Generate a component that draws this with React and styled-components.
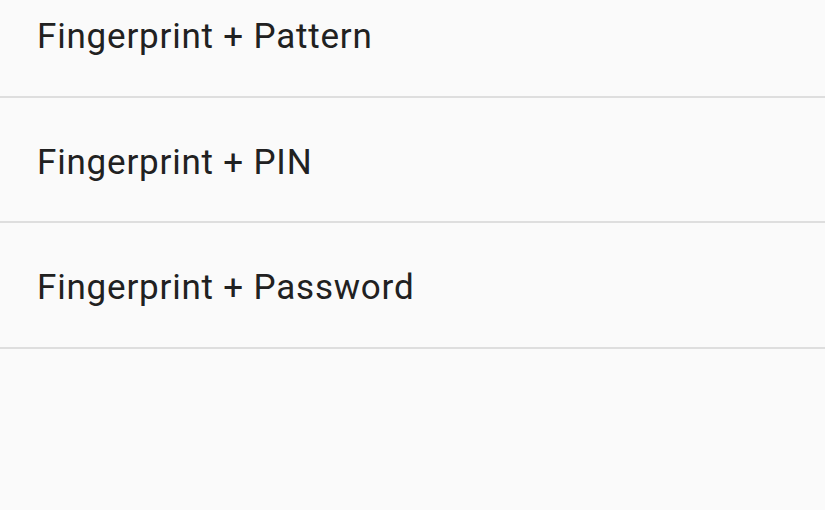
import React from 'react';
import styled, { createGlobalStyle } from 'styled-components';

const GlobalStyle = createGlobalStyle`
  html, body {
    margin: 0;
    padding: 0;
    background: #fafafa;
    overflow: hidden;
  }
`;

const Screen = styled.div`
  width: 825px;
  height: 510px;
  background: #fafafa;
  overflow: hidden;
  font-family: Roboto, "Noto Sans", sans-serif;
`;

const OptionList = styled.ul`
  list-style: none;
  margin: -28px 0 0;
  padding: 0;
`;

const OptionRow = styled.li`
  box-sizing: border-box;
  height: 125.5px;
  display: flex;
  align-items: center;
  padding: 6px 37px 0;
  border-bottom: 2px solid #dedede;
  font-size: 35px;
  color: #212121;
  letter-spacing: 0.8px;
`;

const options = ['Fingerprint + Pattern', 'Fingerprint + PIN', 'Fingerprint + Password'];

const App = () => (
  <Screen>
    <GlobalStyle />
    <OptionList>
      {options.map((label) => (
        <OptionRow key={label}>{label}</OptionRow>
      ))}
    </OptionList>
  </Screen>
);

export default App;
